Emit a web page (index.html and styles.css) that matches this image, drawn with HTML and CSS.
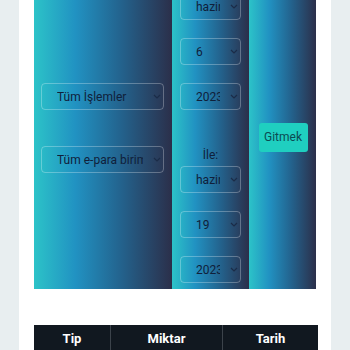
FILE: index.html
```html
<!DOCTYPE html>
<html lang="tr">
<head>
<meta charset="utf-8">
<link rel="stylesheet" href="styles.css">
</head>
<body>
<div class="page">
  <div class="filters">
    <div class="cell cell-left">
      <div class="selwrap wide">
        <select class="sel"><option>Tüm İşlemler</option></select>
        <svg class="chev" viewBox="0 0 8 5" width="8" height="5"><path d="M1 1 L4 4 L7 1" fill="none" stroke="#1b2c48" stroke-width="1.2"/></svg>
      </div>
      <div class="selwrap wide">
        <select class="sel"><option>Tüm e-para birimleri</option></select>
        <svg class="chev" viewBox="0 0 8 5" width="8" height="5"><path d="M1 1 L4 4 L7 1" fill="none" stroke="#1b2c48" stroke-width="1.2"/></svg>
      </div>
    </div>
    <div class="cell cell-mid">
      <div class="selwrap small">
        <select class="sel"><option>haziran</option></select>
        <svg class="chev" viewBox="0 0 8 5" width="8" height="5"><path d="M1 1 L4 4 L7 1" fill="none" stroke="#1b2c48" stroke-width="1.2"/></svg>
      </div>
      <div class="selwrap small">
        <select class="sel"><option>6</option></select>
        <svg class="chev" viewBox="0 0 8 5" width="8" height="5"><path d="M1 1 L4 4 L7 1" fill="none" stroke="#1b2c48" stroke-width="1.2"/></svg>
      </div>
      <div class="selwrap small">
        <select class="sel"><option>2023</option></select>
        <svg class="chev" viewBox="0 0 8 5" width="8" height="5"><path d="M1 1 L4 4 L7 1" fill="none" stroke="#1b2c48" stroke-width="1.2"/></svg>
      </div>
      <div class="label">İle:</div>
      <div class="selwrap small after">
        <select class="sel"><option>haziran</option></select>
        <svg class="chev" viewBox="0 0 8 5" width="8" height="5"><path d="M1 1 L4 4 L7 1" fill="none" stroke="#1b2c48" stroke-width="1.2"/></svg>
      </div>
      <div class="selwrap small">
        <select class="sel"><option>19</option></select>
        <svg class="chev" viewBox="0 0 8 5" width="8" height="5"><path d="M1 1 L4 4 L7 1" fill="none" stroke="#1b2c48" stroke-width="1.2"/></svg>
      </div>
      <div class="selwrap small">
        <select class="sel"><option>2023</option></select>
        <svg class="chev" viewBox="0 0 8 5" width="8" height="5"><path d="M1 1 L4 4 L7 1" fill="none" stroke="#1b2c48" stroke-width="1.2"/></svg>
      </div>
    </div>
    <div class="cell cell-right">
      <button class="go">Gitmek</button>
    </div>
  </div>
  <table class="list">
    <thead>
      <tr><th class="c1">Tip</th><th class="c2">Miktar</th><th class="c3">Tarih</th></tr>
    </thead>
    <tbody>
      <tr><td>&nbsp;</td><td></td><td></td></tr>
    </tbody>
  </table>
</div>
</body>
</html>
```
FILE: styles.css
```css
html, body {
  margin: 0;
  padding: 0;
  background: #e8eef0;
  font-family: Roboto, "Liberation Sans", sans-serif;
}
.page {
  margin: -15px 19px 0;
  padding: 0 15px 40px;
  background: #ffffff;
}
.filters {
  display: grid;
  grid-template-columns: 138px 77px 67px;
}
.cell {
  background: linear-gradient(to right, #2cc3c8 0%, #2192c2 30%, #23648f 62%, #2b2f4a 100%);
  display: flex;
  flex-direction: column;
  box-sizing: border-box;
}
.cell-left {
  justify-content: center;
  gap: 36px;
  padding: 8px 8px 26px 7px;
}
.cell-mid {
  padding: 8px 8px 6px 8px;
}
.cell-right {
  justify-content: center;
  align-items: center;
  padding: 8px 0;
}
.selwrap {
  position: relative;
  height: 27px;
}
.wide {
  width: 123px;
}
.small {
  width: 61px;
  margin-bottom: 18px;
}
.small:last-child {
  margin-bottom: 0;
}
.after {
  margin-top: 2px;
}
.sel {
  display: block;
  width: 100%;
  height: 27px;
  box-sizing: border-box;
  -webkit-appearance: none;
  appearance: none;
  background: transparent;
  border: 1px solid rgba(255, 255, 255, 0.28);
  border-radius: 4px;
  color: #10203a;
  font-family: Roboto, "Liberation Sans", sans-serif;
  font-size: 12px;
  padding: 0 20px 0 15px;
  margin: 0;
  outline: none;
}
.chev {
  position: absolute;
  right: 3px;
  top: 11px;
  pointer-events: none;
}
.label {
  height: 18px;
  line-height: 18px;
  margin-top: 18px;
  text-align: center;
  color: #10203a;
  font-size: 12px;
}
.go {
  width: 49px;
  height: 29px;
  margin-left: 1px;
  background: #1fcfc0;
  color: #0b4b52;
  border: none;
  border-radius: 3px;
  font-family: Roboto, "Liberation Sans", sans-serif;
  font-size: 12px;
  padding: 0;
}
.list {
  width: 282px;
  margin-top: 36px;
  border-collapse: collapse;
  table-layout: fixed;
}
.list th {
  background: #111820;
  color: #ffffff;
  font-weight: bold;
  font-size: 13px;
  height: 27px;
  padding: 0;
  border-left: 1px solid #3c434b;
}
.list th:first-child {
  border-left: none;
}
.c1 { width: 76px; }
.c2 { width: 111px; }
.c3 { width: 95px; }
.list td {
  height: 30px;
}
```
